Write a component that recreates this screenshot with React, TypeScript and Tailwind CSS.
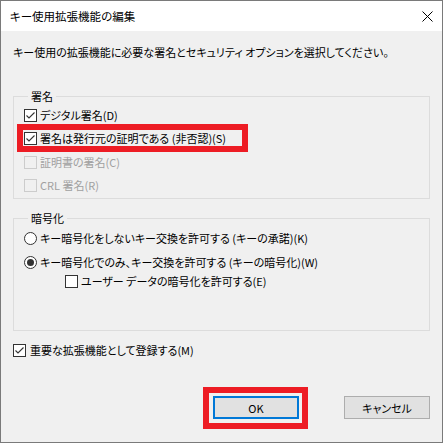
import React from "react";

const font = "[font-family:'Noto_Sans_CJK_JP',sans-serif] [font-feature-settings:'palt']";

function Check({ checked, disabled }: { checked?: boolean; disabled?: boolean }) {
  return (
    <span
      className={
        "w-[13px] h-[13px] shrink-0 border flex items-center justify-center " +
        (disabled ? "border-[#cccccc] bg-[#f0f0f0]" : "border-[#333333] bg-white")
      }
    >
      {checked && (
        <svg width="11" height="11" viewBox="0 0 11 11">
          <polyline points="1.5,5.5 4,8 9.5,2.5" fill="none" stroke="#333333" strokeWidth="1.1" />
        </svg>
      )}
    </span>
  );
}

function Radio({ checked }: { checked?: boolean }) {
  return (
    <span className="w-[13px] h-[13px] shrink-0 rounded-full border border-[#333333] bg-white flex items-center justify-center">
      {checked && <span className="w-[7px] h-[7px] rounded-full bg-[#333333]" />}
    </span>
  );
}

export default function App() {
  return (
    <div
      className={
        "w-[443px] h-[443px] border border-[#7a7a7a] bg-[#f0f0f0] flex flex-col text-[11px] leading-[16px] text-black " +
        font
      }
    >
      <div className="h-[30px] bg-white flex items-center justify-between pl-[9px] pr-[9px] text-[11.5px]">
        <span>キー使用拡張機能の編集</span>
        <svg width="11" height="11" viewBox="0 0 11 11">
          <path d="M0.5 0.5 L10.5 10.5 M10.5 0.5 L0.5 10.5" stroke="#000" strokeWidth="1" />
        </svg>
      </div>
      <div className="flex flex-col px-[12px]">
        <p className="mt-[13px]">キー使用の拡張機能に必要な署名とセキュリティ オプションを選択してください。</p>

        <fieldset className="mt-[28px] border border-[#dcdcdc] pl-[10px] pb-[5px]">
          <legend className="ml-[4px] px-[3px]">署名</legend>
          <div className="flex flex-col">
            <div className="h-[16px] mt-[3px] flex items-center gap-[3px]">
              <Check checked />
              <span>デジタル署名(D)</span>
            </div>
            <div className="relative h-[16px] mt-[7px] flex items-center gap-[3px]">
              <Check checked />
              <span>署名は発行元の証明である (非否認)(S)</span>
              <span className="absolute left-[-7px] top-[-6px] w-[231px] h-[28px] border-[6px] border-[#ed1c24]" />
            </div>
            <div className="h-[16px] mt-[8px] flex items-center gap-[3px] text-[#a0a0a0]">
              <Check disabled />
              <span>証明書の署名(C)</span>
            </div>
            <div className="h-[16px] mt-[7px] flex items-center gap-[3px] text-[#a0a0a0]">
              <Check disabled />
              <span>CRL 署名(R)</span>
            </div>
          </div>
        </fieldset>

        <fieldset className="mt-[11px] border border-[#dcdcdc] pl-[10px] pb-[41px]">
          <legend className="ml-[4px] px-[3px]">暗号化</legend>
          <div className="flex flex-col">
            <div className="h-[16px] mt-[4px] flex items-center gap-[3px]">
              <Radio />
              <span>キー暗号化をしないキー交換を許可する (キーの承諾)(K)</span>
            </div>
            <div className="h-[16px] mt-[8px] flex items-center gap-[3px]">
              <Radio checked />
              <span>キー暗号化でのみ、キー交換を許可する (キーの暗号化)(W)</span>
            </div>
            <div className="h-[16px] mt-[3px] pl-[41px] flex items-center gap-[3px]">
              <Check />
              <span>ユーザー データの暗号化を許可する(E)</span>
            </div>
          </div>
        </fieldset>

        <div className="h-[16px] mt-[11px] flex items-center gap-[4px]">
          <Check checked />
          <span>重要な拡張機能として登録する(M)</span>
        </div>

        <div className="mt-[38px] flex justify-end gap-[45px]">
          <div className="relative">
            <button className="w-[86px] h-[23px] border-2 border-[#0078d7] bg-[#e1e1e1] flex items-center justify-center">
              OK
            </button>
            <span className="absolute left-[-10px] top-[-9px] w-[105px] h-[42px] border-[6px] border-[#ed1c24]" />
          </div>
          <button className="w-[86px] h-[23px] border border-[#adadad] bg-[#e1e1e1] flex items-center justify-center">
            キャンセル
          </button>
        </div>
      </div>
    </div>
  );
}
